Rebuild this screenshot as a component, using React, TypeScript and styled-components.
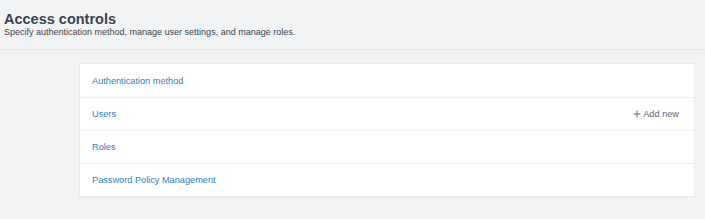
import React from 'react';
import styled, { createGlobalStyle } from 'styled-components';

const GlobalStyle = createGlobalStyle`
  html, body {
    margin: 0;
    padding: 0;
    background: #f2f3f5;
    font-family: "Liberation Sans", Arial, sans-serif;
  }
`;

const Page = styled.div`
  width: 705px;
  height: 219px;
  background: #f2f3f5;
  overflow: hidden;
`;

const Header = styled.header`
  padding: 12px 4px 11px;
  border-bottom: 1px solid #e3e5e8;
`;

const Title = styled.h1`
  margin: 0;
  font-size: 14.5px;
  line-height: 14px;
  font-weight: 700;
  color: #3c444d;
`;

const Subtitle = styled.p`
  margin: 0;
  font-size: 9px;
  line-height: 12px;
  color: #3c444d;
`;

const Main = styled.main`
  padding: 13px 10px 0 79px;
`;

const Card = styled.div`
  background: #ffffff;
  border: 1px solid #e8eaed;
  border-radius: 1px;
`;

const Row = styled.div<{ $first?: boolean }>`
  display: flex;
  align-items: center;
  justify-content: space-between;
  height: 33px;
  box-sizing: border-box;
  padding: 0 15px 0 12px;
  border-top: ${p => (p.$first ? 'none' : '1.5px solid #eceef1')};
`;

const Link = styled.a`
  font-size: 9.2px;
  color: #2a7fc0;
  text-decoration: none;
  cursor: pointer;
`;

const AddButton = styled.button`
  display: flex;
  align-items: center;
  gap: 2px;
  border: none;
  background: none;
  padding: 0;
  font-family: inherit;
  font-size: 9.2px;
  color: #5c6773;
  cursor: pointer;
`;

const PlusIcon = () => (
  <svg width="8" height="8" viewBox="0 0 8 8">
    <path d="M4 0.5v7M0.5 4h7" stroke="#5c6773" strokeWidth="1" fill="none" />
  </svg>
);

const items = [
  { label: 'Authentication method' },
  { label: 'Users', add: true },
  { label: 'Roles' },
  { label: 'Password Policy Management' },
];

export default function App() {
  return (
    <Page>
      <GlobalStyle />
      <Header>
        <Title>Access controls</Title>
        <Subtitle>Specify authentication method, manage user settings, and manage roles.</Subtitle>
      </Header>
      <Main>
        <Card>
          {items.map((item, i) => (
            <Row key={item.label} $first={i === 0}>
              <Link href="#">{item.label}</Link>
              {item.add && (
                <AddButton>
                  <PlusIcon />
                  Add new
                </AddButton>
              )}
            </Row>
          ))}
        </Card>
      </Main>
    </Page>
  );
}
